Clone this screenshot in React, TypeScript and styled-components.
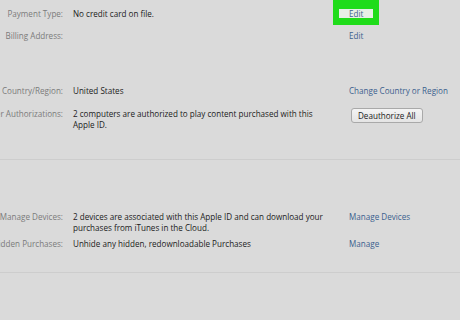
import styled, { createGlobalStyle } from "styled-components";

const GlobalStyle = createGlobalStyle`
    html, body {
        margin: 0;
        padding: 0;
        background: #dadada;
    }
    body {
        font-family: "Open Sans", "Liberation Sans", sans-serif;
        font-size: 8.1px;
        line-height: 11px;
        color: #222;
        overflow: hidden;
    }
`;

const Page = styled.div`
    width: 460px;
    height: 320px;
    background: #dadada;
    overflow: hidden;
`;

const Section = styled.div<{ $top: number }>`
    display: flex;
    flex-direction: column;
    padding-top: ${(p) => p.$top}px;
`;

const Row = styled.div<{ $gap?: number }>`
    display: grid;
    grid-template-columns: 63px 266px 1fr;
    column-gap: 10px;
    align-items: start;
    margin-top: ${(p) => p.$gap ?? 0}px;
`;

const Label = styled.div`
    display: flex;
    justify-content: flex-end;
    white-space: nowrap;
    color: #7b7b7b;
`;

const Value = styled.div`
    padding-right: 10px;
    color: #1a1a1a;
`;

const LinkCell = styled.div`
    white-space: nowrap;
`;

const Link = styled.a`
    color: #3b5f8e;
    text-decoration: none;
    cursor: pointer;
`;

const Highlight = styled.span`
    display: inline-block;
    background: #1fdc1a;
    padding: 8px 6px 6px 6px;
    margin: -8px -6px -6px -16px;
`;

const HighlightInner = styled.span`
    display: inline-block;
    background: #e7efe6;
    padding: 0 10px 0 10px;
    line-height: 9px;
    color: #3b5f8e;
`;

const Button = styled.button`
    height: 15px;
    padding: 0 6px;
    margin-left: 2px;
    font-family: inherit;
    font-size: 8.1px;
    color: #1a1a1a;
    background: linear-gradient(#f4f4f4, #e4e4e4);
    border: 1px solid #a9a9a9;
    border-radius: 3px;
`;

const Divider = styled.div<{ $top: number }>`
    margin-top: ${(p) => p.$top}px;
    height: 1px;
    background: #cdcdcd;
`;

export default function App() {
    return (
        <Page>
            <GlobalStyle />
            <Section $top={8}>
                <Row>
                    <Label>Payment Type:</Label>
                    <Value>No credit card on file.</Value>
                    <LinkCell>
                        <Highlight>
                            <HighlightInner>Edit</HighlightInner>
                        </Highlight>
                    </LinkCell>
                </Row>
                <Row $gap={11}>
                    <Label>Billing Address:</Label>
                    <Value />
                    <LinkCell>
                        <Link>Edit</Link>
                    </LinkCell>
                </Row>
                <Row $gap={44}>
                    <Label>Country/Region:</Label>
                    <Value>United States</Value>
                    <LinkCell>
                        <Link>Change Country or Region</Link>
                    </LinkCell>
                </Row>
                <Row $gap={12}>
                    <Label>Computer Authorizations:</Label>
                    <Value>
                        2 computers are authorized to play content purchased with this Apple ID.
                    </Value>
                    <LinkCell>
                        <Button>Deauthorize All</Button>
                    </LinkCell>
                </Row>
            </Section>
            <Divider $top={29} />
            <Section $top={51}>
                <Row>
                    <Label>Manage Devices:</Label>
                    <Value>
                        2 devices are associated with this Apple ID and can download your purchases from iTunes in the Cloud.
                    </Value>
                    <LinkCell>
                        <Link>Manage Devices</Link>
                    </LinkCell>
                </Row>
                <Row $gap={5}>
                    <Label>Hidden Purchases:</Label>
                    <Value>Unhide any hidden, redownloadable Purchases</Value>
                    <LinkCell>
                        <Link>Manage</Link>
                    </LinkCell>
                </Row>
            </Section>
            <Divider $top={23} />
        </Page>
    );
}
